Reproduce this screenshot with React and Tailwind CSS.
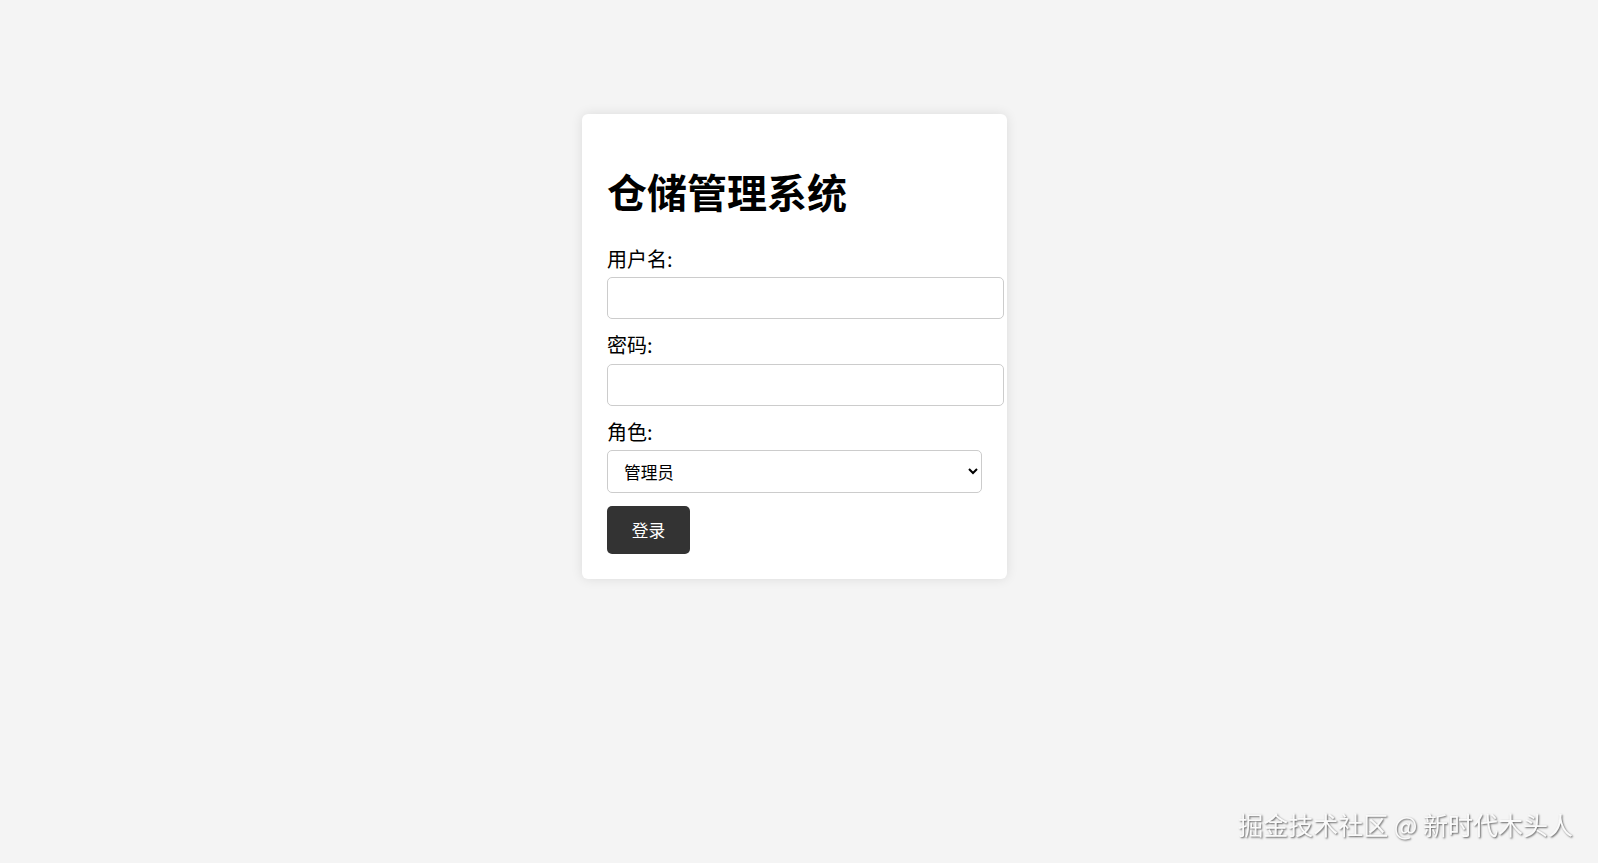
import React from 'react';

const App = () => {
  return (
    <div className="min-h-[863px] bg-[#f4f4f4] font-['Noto_Sans_CJK_SC',sans-serif] text-black pt-[114px]">
      {/* 登录卡片 */}
      <div className="ml-[582px] w-[425px] bg-white rounded-[6px] shadow-[0_0_12px_rgba(0,0,0,0.1)] px-[25px] pt-[25px] pb-[25px]">
        <h1 className="mt-[32px] mb-[35px] text-[40px] leading-[40px] font-bold">仓储管理系统</h1>

        <form onSubmit={(e) => e.preventDefault()}>
          <label className="block h-[26px] leading-[26px] text-[20px] mb-[5px]">用户名:</label>
          <input
            type="text"
            className="block w-[397px] h-[42px] mb-[13px] border border-[#ccc] rounded-[5px] px-[10px] bg-white outline-none"
          />

          <label className="block h-[26px] leading-[26px] text-[20px] mb-[6px]">密码:</label>
          <input
            type="password"
            className="block w-[397px] h-[42px] mb-[13px] border border-[#ccc] rounded-[5px] px-[10px] bg-white outline-none"
          />

          <label className="block h-[26px] leading-[26px] text-[20px] mb-[5px]">角色:</label>
          <select className="block w-[375px] h-[43px] mb-[13px] border border-[#ccc] rounded-[5px] pl-[12px] pr-[8px] text-[16.67px] bg-white">
            <option>管理员</option>
            <option>操作员</option>
          </select>

          <button
            type="submit"
            className="block w-[83px] h-[48px] bg-[#333] text-white text-[16.67px] rounded-[5px]"
          >
            登录
          </button>
        </form>
      </div>

      {/* 水印 */}
      <div className="fixed right-[25px] bottom-[23px] text-[25px] leading-[32px] text-[#fafafa] [text-shadow:1px_1px_2px_rgba(0,0,0,0.6)]">
        掘金技术社区 @ 新时代木头人
      </div>
    </div>
  );
};

export default App;
